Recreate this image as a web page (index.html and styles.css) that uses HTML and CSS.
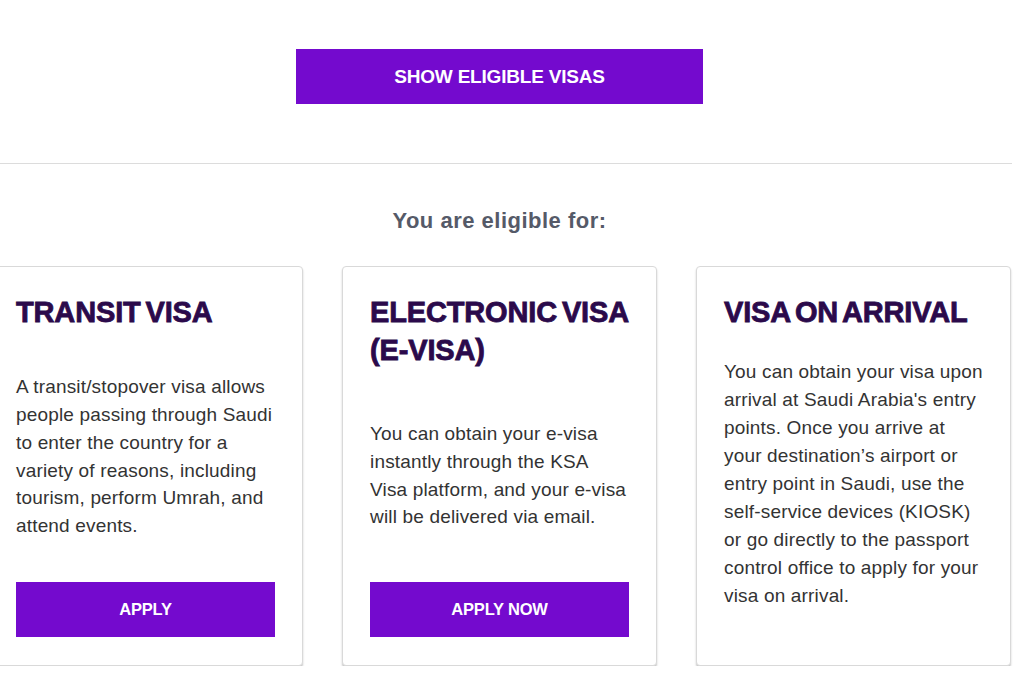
FILE: index.html
```html
<!DOCTYPE html>
<html lang="en">
<head>
<meta charset="utf-8">
<title>Eligible visas</title>
<link rel="stylesheet" href="styles.css">
</head>
<body>
<div class="page">
  <section class="top">
    <button class="btn btn-show" type="button">SHOW ELIGIBLE VISAS</button>
  </section>
  <h2 class="eligible">You are eligible for:</h2>
  <div class="cards">
    <article class="card">
      <h3 class="card-title">TRANSIT VISA</h3>
      <p class="card-text">A transit/stopover visa allows people passing through Saudi to enter the country for a variety of reasons, including tourism, perform Umrah, and attend events.</p>
      <button class="btn btn-card" type="button">APPLY</button>
    </article>
    <article class="card">
      <h3 class="card-title">ELECTRONIC VISA (E-VISA)</h3>
      <p class="card-text">You can obtain your e-visa instantly through the KSA Visa platform, and your e-visa will be delivered via email.</p>
      <button class="btn btn-card" type="button">APPLY NOW</button>
    </article>
    <article class="card">
      <h3 class="card-title">VISA ON ARRIVAL</h3>
      <p class="card-text">You can obtain your visa upon arrival at Saudi Arabia's entry points. Once you arrive at your destination’s airport or entry point in Saudi, use the self-service devices (KIOSK) or go directly to the passport control office to apply for your visa on arrival.</p>
      <div class="card-empty"></div>
    </article>
  </div>
</div>
</body>
</html>
```
FILE: styles.css
```css
html, body {
  margin: 0;
  padding: 0;
  background: #ffffff;
  overflow: hidden;
}

body {
  font-family: "Liberation Sans", Arial, sans-serif;
  color: #333333;
}

.page {
  width: 1012px;
}

.top {
  display: flex;
  justify-content: center;
  padding: 49px 13px 59px 0;
  border-bottom: 1px solid #dcdcdc;
}

.btn {
  border: none;
  background: #740ace;
  color: #ffffff;
  font-family: "Liberation Sans", Arial, sans-serif;
  font-weight: 700;
  cursor: pointer;
  padding: 0;
}

.btn-show {
  width: 407px;
  height: 55px;
  font-size: 19px;
  letter-spacing: -0.2px;
}

.eligible {
  margin: 44px 13px 0 0;
  text-align: center;
  font-size: 22px;
  line-height: 26px;
  font-weight: 700;
  color: #555a68;
  letter-spacing: 0.5px;
}

.cards {
  display: grid;
  grid-template-columns: repeat(3, 315px);
  column-gap: 39px;
  margin: 32px 0 0 -12px;
}

.card {
  box-sizing: border-box;
  height: 400px;
  padding: 26px 27px 28px;
  border: 1px solid #d9d9d9;
  border-radius: 4px;
  box-shadow: 0 2px 2px rgba(0, 0, 0, 0.22);
  background: #ffffff;
  display: flex;
  flex-direction: column;
  justify-content: space-between;
}

.card-title {
  margin: 0;
  font-size: 29px;
  line-height: 38px;
  font-weight: 700;
  letter-spacing: -0.15px;
  word-spacing: -3px;
  color: #2b0a4b;
  -webkit-text-stroke: 0.8px #2b0a4b;
}

.card-text {
  margin: 0;
  font-size: 19px;
  letter-spacing: 0.17px;
  line-height: 27.9px;
  color: #333333;
}

.btn-card {
  width: 100%;
  height: 55px;
  font-size: 16.5px;
  letter-spacing: -0.2px;
}

.card-empty {
  height: 0;
}
```
